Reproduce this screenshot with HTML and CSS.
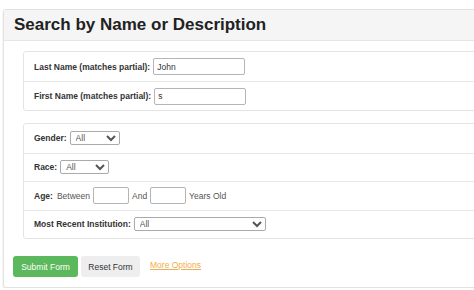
FILE: index.html
```html
<!DOCTYPE html>
<html>
<head>
<meta charset="utf-8">
<link rel="stylesheet" href="styles.css">
</head>
<body>
<div class="panel">
  <div class="panel-head"><h2>Search by Name or Description</h2></div>
  <div class="panel-body">
    <div class="box">
      <div class="row"><label>Last Name (matches partial):</label><input class="txt" type="text" value="John"></div>
      <div class="row"><label>First Name (matches partial):</label><input class="txt" type="text" value="s"></div>
    </div>
    <div class="box box2">
      <div class="row"><label>Gender:</label><select class="sel sel-gender"><option>All</option></select></div>
      <div class="row"><label>Race:</label><select class="sel sel-race"><option>All</option></select></div>
      <div class="row age"><label>Age:</label><span class="plain">Between</span><input class="txt small" type="text"><span class="plain">And</span><input class="txt small" type="text"><span class="plain">Years Old</span></div>
      <div class="row"><label>Most Recent Institution:</label><select class="sel sel-inst"><option>All</option></select></div>
    </div>
    <div class="actions">
      <button class="btn btn-submit">Submit Form</button>
      <button class="btn btn-reset">Reset Form</button>
      <a class="more" href="#">More Options</a>
    </div>
  </div>
</div>
</body>
</html>
```
FILE: styles.css
```css
* { box-sizing: border-box; }
html, body { margin: 0; padding: 0; background: #fff; overflow: hidden; }
body { font-family: "Liberation Sans", Arial, sans-serif; color: #333; }
.panel {
  margin: 9px 0 0 3px;
  width: 540px;
  height: 279px;
  border: 1px solid #e2e2e2;
  border-radius: 3px;
  box-shadow: 0 1px 2px rgba(0,0,0,0.12);
  background: #fff;
}
.panel-head {
  height: 31px;
  background: #f5f5f5;
  border-bottom: 1px solid #e6e6e6;
  padding-left: 10px;
  display: flex;
  align-items: center;
}
.panel-head h2 { margin: 0; font-size: 17px; font-weight: bold; color: #222; }
.panel-body { padding: 10px 0 0 9px; }
.box {
  margin-left: 10px;
  border: 1px solid #e4e4e4;
  border-radius: 3px;
}
.box2 { margin-top: 12px; }
.row {
  display: flex;
  align-items: center;
  gap: 2px;
  padding-left: 10px;
  height: 29px;
  border-top: 1px solid #e8e8e8;
  font-size: 8.5px;
}
.row:first-child { border-top: none; }
.box2 .row { height: 28.5px; }
.row.age { gap: 3px; }
label { font-weight: bold; color: #333; margin-right: 1px; }
.plain { color: #555; }
.txt {
  height: 17px;
  width: 92px;
  border: 1px solid #b5b5b5;
  border-radius: 2px;
  font-family: "Liberation Sans", Arial, sans-serif;
  font-size: 8.5px;
  color: #333;
  padding: 0 3px;
  outline: none;
}
.txt.small { width: 36px; }
.sel {
  height: 14px;
  font-family: "Liberation Sans", Arial, sans-serif;
  font-size: 8.5px;
  color: #555;
  border: 1px solid #aaa;
  border-radius: 2px;
  padding: 0 0 0 1px;
  background: #fff;
}
.sel-gender { width: 50px; }
.sel-race { width: 49px; }
.sel-inst { width: 132px; }
.actions {
  display: flex;
  align-items: center;
  margin-top: 17px;
  gap: 3px;
}
.btn {
  height: 21px;
  border: none;
  border-radius: 3px;
  font-family: "Liberation Sans", Arial, sans-serif;
  font-size: 8.5px;
  padding: 0;
  white-space: nowrap;
}
.btn-submit { background: #5cb85c; color: #fff; width: 65px; }
.btn-reset { background: #eeeeee; color: #333; width: 59px; }
.more {
  margin-left: 7px;
  margin-top: -4px;
  font-size: 8.5px;
  color: #f0ad4e;
  text-decoration: underline;
}
```
